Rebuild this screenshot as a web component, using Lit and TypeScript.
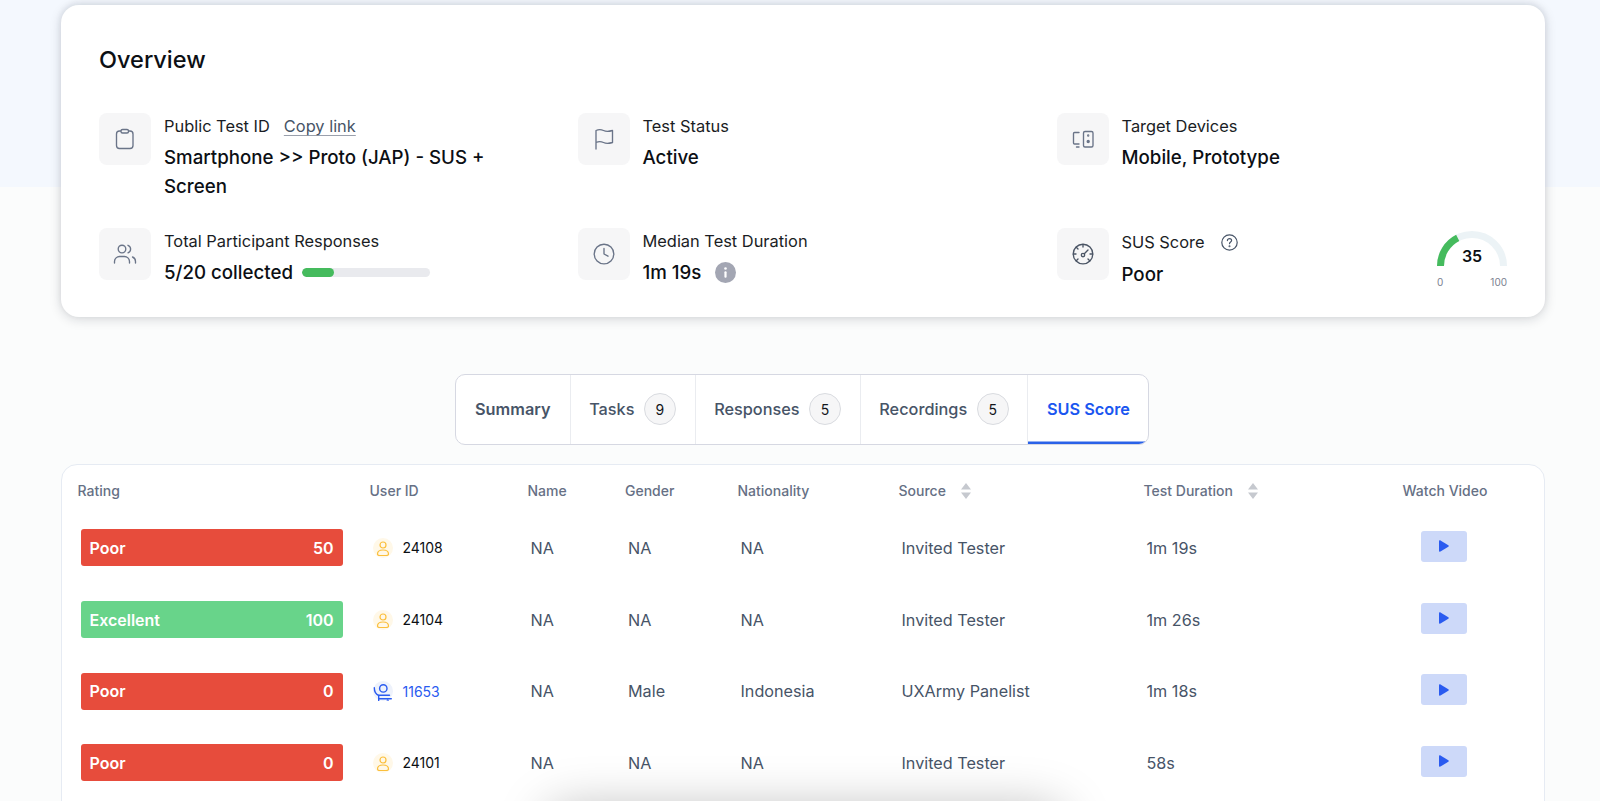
import { LitElement, html, css, svg } from "lit";
import { customElement } from "lit/decorators.js";

type Row = {
  rating: string;
  score: number;
  id: string;
  panelist?: boolean;
  gender: string;
  nationality: string;
  source: string;
  duration: string;
};

const ROWS: Row[] = [
  { rating: "Poor", score: 50, id: "24108", gender: "NA", nationality: "NA", source: "Invited Tester", duration: "1m 19s" },
  { rating: "Excellent", score: 100, id: "24104", gender: "NA", nationality: "NA", source: "Invited Tester", duration: "1m 26s" },
  { rating: "Poor", score: 0, id: "11653", panelist: true, gender: "Male", nationality: "Indonesia", source: "UXArmy Panelist", duration: "1m 18s" },
  { rating: "Poor", score: 0, id: "24101", gender: "NA", nationality: "NA", source: "Invited Tester", duration: "58s" },
];

const TABS = [
  { label: "Summary" },
  { label: "Tasks", count: 9 },
  { label: "Responses", count: 5 },
  { label: "Recordings", count: 5 },
  { label: "SUS Score", active: true },
];

const icon = (body: unknown) => html`<svg class="tile-icon" viewBox="0 0 24 24" fill="none" stroke="currentColor" stroke-width="1.35" stroke-linecap="round" stroke-linejoin="round">${body}</svg>`;

const ICONS = {
  clipboard: icon(svg`<rect x="3.5" y="4" width="16.5" height="17.5" rx="3"/><rect x="8" y="2.5" width="7.5" height="3.5" rx="1.5" fill="#f6f6f7"/>`),
  flag: icon(svg`<path d="M4 22V3.5c2.5-1.2 5-1.2 7.5 0s5 1.2 9 0v12c-4 1.2-6.5 1.2-9 0s-5-1.2-7.5 0"/>`),
  devices: icon(svg`<rect x="12.5" y="4.500" width="9.500" height="15.500" rx="1.500"/><circle cx="17.200" cy="8.500" r=".5"/><circle cx="17.200" cy="14.500" r="1" fill="currentColor"/><path d="M8 5.500H3.500a1 1 0 0 0-1 1V16a1 1 0 0 0 1 1H8M5.500 20H8"/>`),
  users: icon(svg`<circle cx="9" cy="7" r="3.800"/><path d="M1.500 21v-1.500c0-3 2.500-5 5-5h5c2.500 0 5 2 5 5V21M15 3.300a4 4 0 0 1 0 7.500M19.500 15c2 .7 3 2.500 3 4.500V21"/>`),
  clock: icon(svg`<circle cx="12" cy="12" r="9.800"/><path d="M12 6.500V12l4 2.200"/>`),
  gauge: icon(svg`<circle cx="12" cy="12" r="9.800"/><circle cx="12" cy="13" r="1.700"/><path d="M13.300 11.700 17 8M12 2.500V5M21.500 12H19M2.500 12H5M5.300 18.700 7 17M18.700 18.700 17 17M5.300 5.300 7 7"/>`),
};

const sortIcon = html`<svg class="sort" viewBox="0 0 10 16"><path d="M5 0l5 6.500H0zM5 16l5-6.500H0z" fill="#c6c9cf"/></svg>`;

@customElement("app-root")
export class AppRoot extends LitElement {
  static override styles = css`
    :host {
      display: block;
      position: relative;
      height: 801px;
      overflow: hidden;
      box-sizing: border-box;
      padding: 5px 55px 0 60.5px;
      font-family: Inter, "Liberation Sans", sans-serif;
      background: linear-gradient(#f4f8fe 187px, #fbfcfc 187px);
      color: #0c0f14;
    }

    .overview {
      height: 312px;
      box-sizing: border-box;
      padding: 40px 38px 0 38.5px;
      background: #fff;
      border-radius: 18px;
      box-shadow: 0 2px 12px rgba(16, 24, 40, 0.17), 0 -2px 6px rgba(16, 24, 40, 0.07);
    }
    h1 {
      margin: 0 0 38px;
      font-size: 23.500px;
      line-height: 30px;
      font-weight: 500;
    }
    .facts {
      display: grid;
      grid-template-columns: 478.500px 479px 1fr;
      grid-template-rows: 115px auto;
    }
    .fact {
      display: flex;
      align-items: flex-start;
      gap: 13px;
    }
    .tile {
      flex: none;
      display: flex;
      align-items: center;
      justify-content: center;
      width: 52px;
      height: 52px;
      border-radius: 8px;
      background: #f6f6f7;
      color: #6a7488;
    }
    .tile-icon {
      width: 24px;
      height: 24px;
    }
    .tile.dark {
      color: #4b5565;
    }
    .fact-text {
      max-width: 360px;
    }
    .label {
      display: flex;
      align-items: center;
      height: 24px;
      margin-top: 1px;
      font-size: 16.400px;
      color: #1a1d24;
    }
    .copy {
      margin-left: 14px;
      color: #475467;
      text-decoration: underline;
      text-decoration-color: #9aa0ac;
      text-underline-offset: 3px;
    }
    .help {
      width: 17px;
      height: 17px;
      margin-left: 16px;
      color: #475467;
    }
    .value {
      display: flex;
      align-items: center;
      margin-top: 5px;
      font-size: 18.700px;
      line-height: 29px;
      font-weight: 500;
    }
    .label.sus {
      margin-top: 2px;
    }
    .value.sus {
      margin-top: 6px;
    }
    .progress {
      width: 128px;
      height: 9px;
      margin-left: 9px;
      border-radius: 5px;
      background: #e9eaee;
      overflow: hidden;
    }
    .progress span {
      display: block;
      height: 100%;
      border-radius: 5px;
      background: #45bb5d;
    }
    .info {
      width: 21px;
      height: 21px;
      margin-left: 14px;
    }
    .gauge {
      margin-left: auto;
      margin-top: 2.500px;
      width: 70px;
    }
    .gauge svg {
      display: block;
    }
    .gauge-scale {
      display: flex;
      justify-content: space-between;
      margin-top: 8px;
      font-size: 10px;
      line-height: 14px;
      color: #7b8190;
    }

    .tabs {
      display: flex;
      width: max-content;
      height: 71.500px;
      box-sizing: border-box;
      margin: 56.500px 0 18.500px 394.500px;
      background: #fff;
      border: 1.5px solid #d6d8e2;
      border-radius: 10px;
      overflow: hidden;
    }
    .tab {
      display: flex;
      align-items: center;
      gap: 9.500px;
      padding: 0 18.600px;
      font-size: 16.300px;
      font-weight: 500;
      color: #475467;
      border-right: 1px solid #eaecf0;
    }
    .tab:first-child {
      font-weight: 600;
      padding: 0 19px;
    }
    .tab:last-child {
      border-right: 0;
    }
    .tab.active {
      font-weight: 600;
      color: #1a56f0;
      box-shadow: inset 0 -2.5px 0 #2a62e8;
    }
    .count {
      display: flex;
      align-items: center;
      justify-content: center;
      width: 32px;
      height: 32px;
      box-sizing: border-box;
      border: 1px solid #d9dbe0;
      border-radius: 50%;
      background: #f6f6f7;
      font-size: 14px;
      font-weight: 400;
      color: #14171c;
    }

    .table {
      box-sizing: border-box;
      padding: 15px 0 60px 16px;
      background: #fff;
      border: 1px solid #e6ebf3;
      border-radius: 16px;
    }
    .head,
    .row {
      display: grid;
      grid-template-columns: 292px 158px 97.500px 112.500px 161px 245px 258px 87px;
      align-items: center;
    }
    .head {
      height: 22px;
      margin-bottom: 10.700px;
      font-size: 14px;
      font-weight: 500;
      color: #667085;
    }
    .head > div {
      display: flex;
      align-items: center;
      gap: 15px;
      white-space: nowrap;
    }
    .sort {
      width: 10px;
      height: 16px;
    }
    .row {
      height: 71.600px;
      font-size: 16.200px;
      color: #475467;
    }
    .row > div {
      padding-left: 3px;
      white-space: nowrap;
    }
    .bar {
      display: flex;
      justify-content: space-between;
      align-items: center;
      width: 262px;
      height: 37px;
      box-sizing: border-box;
      padding: 0 9px;
      border-radius: 3px;
      font-size: 16px;
      font-weight: 600;
      color: #fff;
    }
    .bar.poor {
      background: #e74c3c;
    }
    .bar.excellent {
      background: #68d48a;
    }
    .row > .user {
      display: flex;
      align-items: center;
      gap: 10px;
      font-size: 14px;
      color: #0c0f14;
    }
    .row > .user.panelist {
      color: #2a5bf0;
    }
    .avatar {
      width: 20px;
      height: 20px;
    }
    .row > .watch {
      display: flex;
      justify-content: center;
      padding: 0 3px 3px 0;
    }
    .head .watch-head {
      justify-content: center;
    }
    .play {
      display: flex;
      align-items: center;
      justify-content: center;
      width: 46px;
      height: 31px;
      border-radius: 3px;
      background: #cdd9f9;
    }
    .play svg {
      width: 11px;
      height: 12px;
    }

    .peek {
      position: absolute;
      left: 555px;
      top: 818px;
      width: 500px;
      height: 30px;
      border-radius: 16px;
      box-shadow: 0 0 50px 10px rgba(0, 0, 0, 0.27);
    }
  `;

  private renderAvatar(panelist?: boolean) {
    if (panelist) {
      return html`<svg class="avatar" viewBox="0 0 20 20" fill="none">
        <circle cx="10" cy="10" r="10" fill="#eef2fb" />
        <g stroke="#2a5bf0" stroke-width="1.400" stroke-linecap="round">
          <circle cx="10.300" cy="7.400" r="3.700" />
          <path d="M1.300 6.700c0 3.500 1.700 6.500 4.400 7.800V19.500M5.700 14.300H16.500M5.700 17.700H18.300" />
          <circle cx="14.700" cy="19.300" r=".3" />
        </g>
      </svg>`;
    }
    return html`<svg class="avatar" viewBox="0 0 20 20" fill="none">
      <circle cx="10" cy="10" r="10" fill="#fff8e8" />
      <g stroke="#fbbf3c" stroke-width="1.200">
        <circle cx="10" cy="7" r="3" />
        <path d="M4.500 16c0-2.600 2.500-4 5.500-4s5.500 1.400 5.500 4c0 1-1 1.500-2.500 1.500H7C5.500 17.500 4.500 17 4.500 16z" />
      </g>
    </svg>`;
  }

  private renderGauge() {
    return html`<div class="gauge">
      <svg width="70" height="36" viewBox="0 0 70 36" fill="none">
        <path d="M3.500 35a31.500 31.500 0 0 1 63 0" stroke="#ecf3f6" stroke-width="7" />
        <path d="M3.500 35A31.500 31.500 0 0 1 20.700 6.900" stroke="#45bb5d" stroke-width="7" />
        <text x="35" y="31" text-anchor="middle" font-size="16" font-weight="600" fill="#0c0f14">35</text>
      </svg>
      <div class="gauge-scale"><span>0</span><span>100</span></div>
    </div>`;
  }

  override render() {
    return html`
      <section class="overview">
        <h1>Overview</h1>
        <div class="facts">
          <div class="fact">
            <div class="tile">${ICONS.clipboard}</div>
            <div class="fact-text">
              <div class="label">Public Test ID<span class="copy">Copy link</span></div>
              <div class="value">Smartphone &gt;&gt; Proto (JAP) - SUS + Screen</div>
            </div>
          </div>
          <div class="fact">
            <div class="tile">${ICONS.flag}</div>
            <div class="fact-text">
              <div class="label">Test Status</div>
              <div class="value">Active</div>
            </div>
          </div>
          <div class="fact">
            <div class="tile">${ICONS.devices}</div>
            <div class="fact-text">
              <div class="label">Target Devices</div>
              <div class="value">Mobile, Prototype</div>
            </div>
          </div>
          <div class="fact">
            <div class="tile">${ICONS.users}</div>
            <div class="fact-text">
              <div class="label">Total Participant Responses</div>
              <div class="value">
                5/20 collected
                <div class="progress"><span style="width: ${(5 / 20) * 100}%"></span></div>
              </div>
            </div>
          </div>
          <div class="fact">
            <div class="tile">${ICONS.clock}</div>
            <div class="fact-text">
              <div class="label">Median Test Duration</div>
              <div class="value">
                1m 19s
                <svg class="info" viewBox="0 0 21 21">
                  <circle cx="10.500" cy="10.500" r="10.500" fill="#a3a6b3" />
                  <circle cx="10.500" cy="6.500" r="1.300" fill="#fff" />
                  <rect x="9.400" y="9.300" width="2.200" height="6.500" rx="1" fill="#fff" />
                </svg>
              </div>
            </div>
          </div>
          <div class="fact">
            <div class="tile dark">${ICONS.gauge}</div>
            <div class="fact-text">
              <div class="label sus">
                SUS Score
                <svg class="help" viewBox="0 0 17 17" fill="none" stroke="currentColor" stroke-width="1.200" stroke-linecap="round">
                  <circle cx="8.500" cy="8.500" r="7.700" />
                  <path d="M6.400 6.600c0-1.200 1-2 2.100-2s2.100.8 2.100 1.900c0 1.500-2.100 1.600-2.100 3.200" />
                  <circle cx="8.500" cy="12.300" r=".4" />
                </svg>
              </div>
              <div class="value sus">Poor</div>
            </div>
            ${this.renderGauge()}
          </div>
        </div>
      </section>

      <nav class="tabs">
        ${TABS.map(
          (t) => html`<div class="tab ${t.active ? "active" : ""}">
            ${t.label}${t.count ? html`<span class="count">${t.count}</span>` : null}
          </div>`
        )}
      </nav>

      <section class="table">
        <div class="head">
          <div>Rating</div>
          <div>User ID</div>
          <div>Name</div>
          <div>Gender</div>
          <div>Nationality</div>
          <div>Source ${sortIcon}</div>
          <div>Test Duration ${sortIcon}</div>
          <div class="watch-head">Watch Video</div>
        </div>
        ${ROWS.map(
          (r) => html`<div class="row">
            <div>
              <div class="bar ${r.rating.toLowerCase()}"><span>${r.rating}</span><span>${r.score}</span></div>
            </div>
            <div class="user ${r.panelist ? "panelist" : ""}">${this.renderAvatar(r.panelist)}${r.id}</div>
            <div>NA</div>
            <div>${r.gender}</div>
            <div>${r.nationality}</div>
            <div>${r.source}</div>
            <div>${r.duration}</div>
            <div class="watch">
              <div class="play">
                <svg viewBox="0 0 11 12"><path d="M1 1.200c0-.8.8-1.200 1.500-.8l7.800 4.800c.6.400.6 1.200 0 1.600l-7.800 4.800c-.7.400-1.500 0-1.500-.8z" fill="#2a5bf0" /></svg>
              </div>
            </div>
          </div>`
        )}
      </section>
      <div class="peek"></div>
    `;
  }
}

declare global {
  interface HTMLElementTagNameMap {
    "app-root": AppRoot;
  }
}
